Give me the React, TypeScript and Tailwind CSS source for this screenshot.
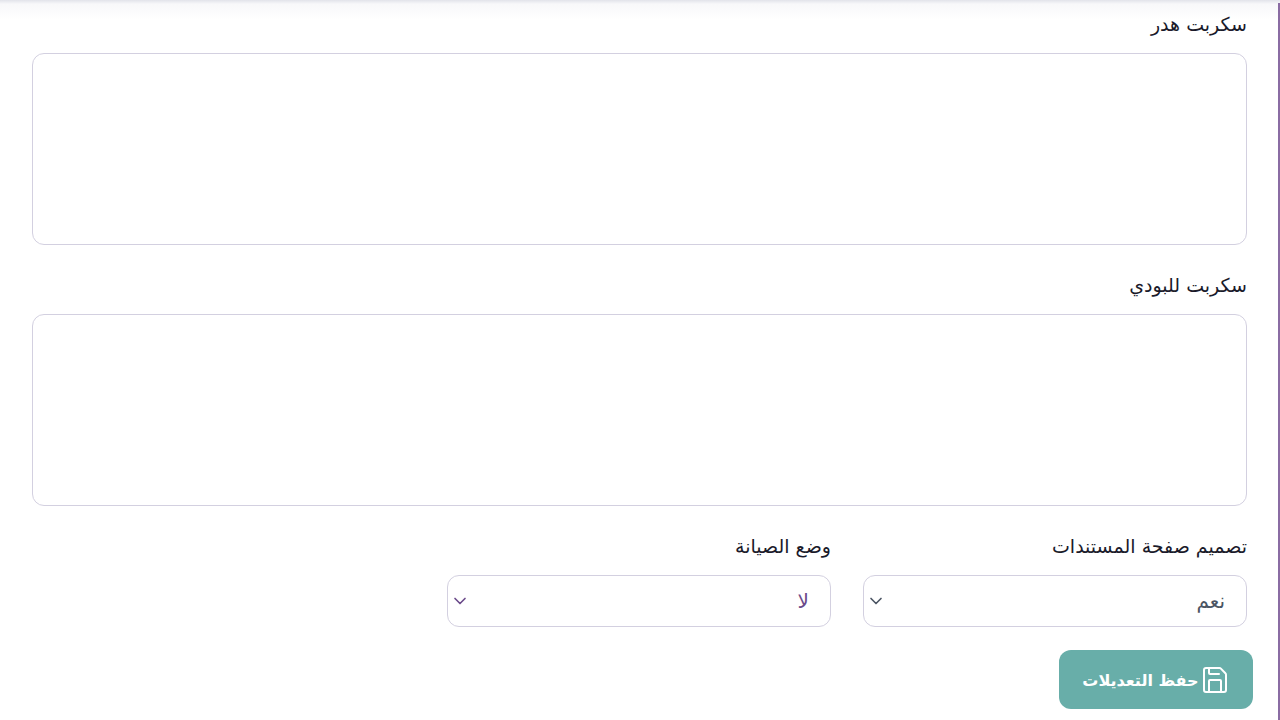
import { ChevronDown } from "lucide-react";

function ScriptField({ label }: { label: string }) {
  return (
    <div className="flex flex-col">
      <label className="text-[19px] leading-[20px] text-[#1a1a2a] h-[39px]">{label}</label>
      <textarea className="h-[192px] w-full rounded-[12px] border border-[#d3d0e0] bg-white resize-none" />
    </div>
  );
}

function SelectField({ label, value, tone }: { label: string; value: string; tone: string }) {
  return (
    <div className="flex flex-col w-[384px]">
      <label className="text-[19px] leading-[20px] text-[#1a1a2a] h-[39px]">{label}</label>
      <div className="h-[52px] rounded-[12px] border border-[#d3d0e0] bg-white flex items-center justify-between pr-[21px] pl-[2px]">
        <span className={`text-[20px] ${tone}`}>{value}</span>
        <ChevronDown size={20} strokeWidth={2} className={tone} />
      </div>
    </div>
  );
}

export default function App() {
  return (
    <div dir="rtl" className="relative h-[720px] w-[1280px] overflow-hidden bg-white [font-family:'DejaVu_Sans',sans-serif]">
      <div className="absolute inset-x-0 top-0 h-[20px] bg-gradient-to-b from-[#e2e3ea] via-[#f8f8fa] via-20% to-white" />
      <div className="absolute right-0 top-[3px] bottom-0 w-[2px] bg-[#8a6ca3]" />
      <div className="relative flex flex-col gap-[30px] pr-[33px] pl-[32px] pt-[14px]">
        <ScriptField label="سكربت هدر" />
        <ScriptField label="سكربت للبودي" />
        <div className="flex gap-[32px]">
          <SelectField label="تصميم صفحة المستندات" value="نعم" tone="text-[#4b5563]" />
          <SelectField label="وضع الصيانة" value="لا" tone="text-[#6b4a8a]" />
        </div>
      </div>
      <div className="pr-[27px] pt-[23px]">
        <button className="h-[59px] w-[194px] rounded-[12px] bg-[#68aea9] pr-[2px] text-white flex items-center justify-center gap-[3px] text-[16px] font-bold">
          <svg width="26" height="28" viewBox="0 0 26 28" fill="none" stroke="currentColor" strokeWidth="2" strokeLinecap="round" strokeLinejoin="round">
            <path d="M4 2h13.5a2 2 0 0 1 1.4.6l4.5 4.7a2 2 0 0 1 .6 1.4V24a2 2 0 0 1-2 2H4a2 2 0 0 1-2-2V4a2 2 0 0 1 2-2z" />
            <path d="M7 26V15a1 1 0 0 1 1-1h10a1 1 0 0 1 1 1v11" />
            <path d="M7 2v5a1 1 0 0 0 1 1h9" />
          </svg>
          <span className="mt-[3px]">حفظ التعديلات</span>
        </button>
      </div>
    </div>
  );
}
